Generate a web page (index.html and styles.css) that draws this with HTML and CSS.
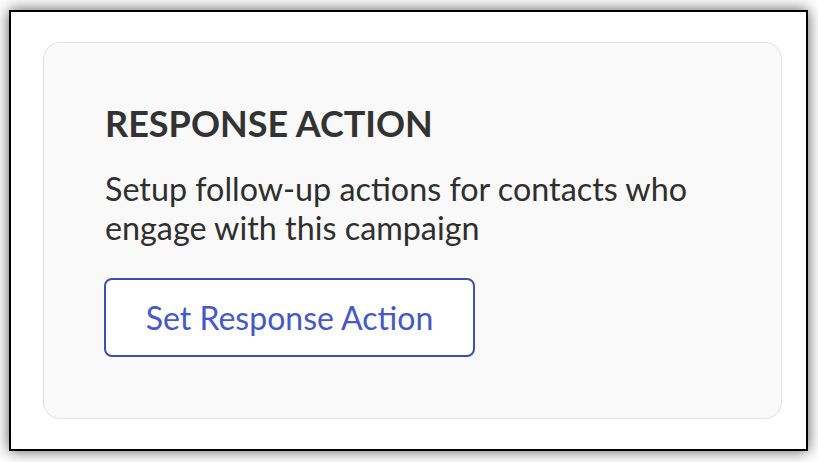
FILE: index.html
```html
<!DOCTYPE html>
<html>
<head>
<meta charset="utf-8">
<link rel="stylesheet" href="styles.css">
</head>
<body>
<div class="frame">
  <div class="card">
    <h1 class="title">RESPONSE ACTION</h1>
    <p class="desc">Setup follow-up actions for contacts who engage with this campaign</p>
    <button class="btn">Set Response Action</button>
  </div>
</div>
</body>
</html>
```
FILE: styles.css
```css
html, body {
  margin: 0;
  padding: 0;
  background: #ffffff;
}
body {
  width: 818px;
  height: 462px;
  overflow: hidden;
  font-family: Lato, "Noto Sans", sans-serif;
}
.frame {
  box-sizing: border-box;
  margin: 10px 0 0 9px;
  width: 799px;
  height: 441px;
  border: 2px solid #000;
  background: #fff;
  box-shadow: 0 0 14px rgba(0, 0, 0, 0.65);
  padding: 30px 24px 30px 32px;
}
.card {
  box-sizing: border-box;
  height: 100%;
  border: 1.5px solid #e2e2e2;
  border-radius: 17px;
  background: #f9f9f9;
  padding: 58px 40px 0 61px;
}
.title {
  margin: 0;
  font-size: 36px;
  line-height: 44px;
  font-weight: 700;
  color: #333333;
}
.desc {
  margin: 24px 0 0;
  font-size: 32.3px;
  line-height: 39px;
  font-weight: 400;
  color: #2f2f2f;
  max-width: 620px;
}
.btn {
  display: block;
  margin: 31px 0 0 -1px;
  box-sizing: border-box;
  width: 371px;
  height: 79px;
  border: 2px solid #3f4fb0;
  border-radius: 8px;
  background: #ffffff;
  color: #4658c4;
  font-family: Lato, "Noto Sans", sans-serif;
  font-size: 32px;
  line-height: 38px;
  padding: 0;
  text-align: center;
}
```
